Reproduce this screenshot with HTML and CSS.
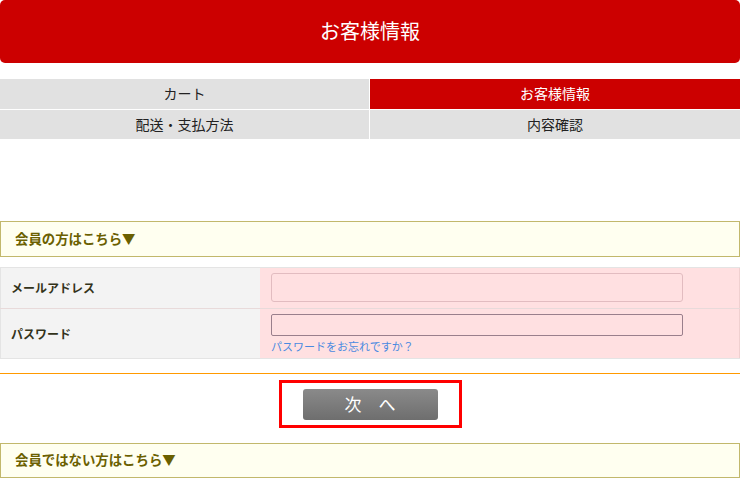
FILE: index.html
```html
<!DOCTYPE html>
<html lang="ja">
<head>
<meta charset="utf-8">
<link rel="stylesheet" href="styles.css">
</head>
<body>
<div class="page">
  <h1 class="title">お客様情報</h1>
  <div class="steps">
    <div class="step">カート</div>
    <div class="step active">お客様情報</div>
    <div class="step">配送・支払方法</div>
    <div class="step">内容確認</div>
  </div>
  <div class="section-head member">会員の方はこちら▼</div>
  <div class="form">
    <div class="row row1">
      <div class="label">メールアドレス</div>
      <div class="field"><div class="input email"></div></div>
    </div>
    <div class="row row2">
      <div class="label">パスワード</div>
      <div class="field">
        <div class="input pass"></div>
        <a class="forgot">パスワードをお忘れですか？</a>
      </div>
    </div>
  </div>
  <div class="divider"></div>
  <div class="actions">
    <div class="focus"><div class="btn">次　へ</div></div>
  </div>
  <div class="section-head guest">会員ではない方はこちら▼</div>
</div>
</body>
</html>
```

FILE: styles.css
```css
* { box-sizing: border-box; }
body {
  margin: 0;
  font-family: "Noto Sans CJK JP", "Noto Sans", sans-serif;
  background: #fff;
  color: #222;
}
.page { width: 740px; }
.title {
  margin: 0;
  height: 63px;
  background: #cc0000;
  color: #fff;
  border-radius: 5px;
  font-weight: normal;
  font-size: 20px;
  display: flex;
  align-items: center;
  justify-content: center;
  padding-bottom: 2px;
}
.steps {
  margin-top: 16px;
  display: grid;
  grid-template-columns: 369px 370px;
  column-gap: 1px;
  row-gap: 1px;
}
.step {
  height: 30px;
  background: #e1e1e1;
  display: flex;
  align-items: center;
  justify-content: center;
  font-size: 14px;
  color: #222;
  padding-bottom: 2px;
}
.step.active { background: #cc0000; color: #fff; }
.steps .step:nth-child(n+3) { height: 29px; }
.section-head {
  height: 36px;
  border: 1px solid #c2b86c;
  background: #fffff0;
  color: #6b6000;
  font-weight: bold;
  font-size: 13.4px;
  display: flex;
  align-items: center;
  padding-left: 14px;
  padding-bottom: 3px;
}
.member { margin-top: 82px; }
.form {
  margin-top: 10px;
  border-top: 1px solid #e4e4e4;
  border-bottom: 1px solid #e4e4e4;
}
.row { display: flex; }
.row1 { height: 41px; border-bottom: 1px solid #e8dada; }
.row2 { height: 49px; }
.label {
  width: 260px;
  background: #f3f3f3;
  border-left: 1px solid #e4e4e4;
  font-size: 12px;
  font-weight: bold;
  color: #33331a;
  display: flex;
  align-items: center;
  padding-left: 10px;
  padding-bottom: 1px;
}
.field {
  flex: 1;
  background: #ffe0e1;
  padding: 5px 0 0 11px;
  border-right: 1px solid #f0d0d0;
}
.input { width: 412px; background: #ffe0e1; }
.email { height: 29px; border: 1px solid #e2bcc0; border-radius: 3px; }
.pass { height: 22px; border: 1px solid #9a7f8c; border-radius: 2px; }
.forgot {
  display: block;
  margin-top: 3px;
  font-size: 11px;
  color: #4a8ae0;
  line-height: 14px;
}
.divider { margin-top: 14px; height: 1px; background: #ff9900; }
.actions {
  display: flex;
  justify-content: center;
  padding-top: 6px;
}
.focus {
  width: 183px;
  height: 48px;
  border: 3px solid #ff0000;
  display: flex;
  align-items: center;
  justify-content: center;
}
.btn {
  width: 135px;
  height: 31px;
  border-radius: 3px;
  background: linear-gradient(#8a8a8a, #6e6e6e);
  color: #fff;
  font-size: 17px;
  display: flex;
  align-items: center;
  justify-content: center;
  padding-bottom: 1px;
}
.guest { margin-top: 15px; height: 35px; }
```
